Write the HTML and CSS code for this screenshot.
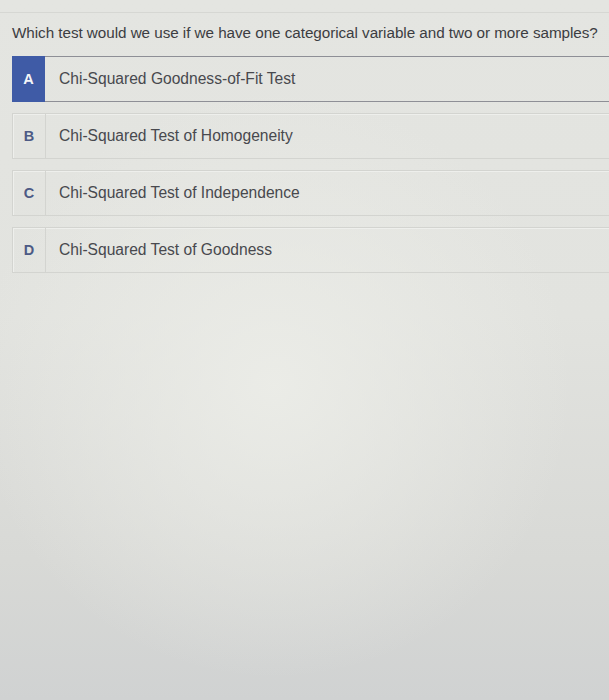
FILE: index.html
```html
<!DOCTYPE html>
<html>
<head>
<meta charset="utf-8">
<link rel="stylesheet" href="styles.css">
</head>
<body>
<div class="page">
  <div class="topline"></div>
  <p class="question">Which test would we use if we have one categorical variable and two or more samples?</p>
  <div class="options">
    <div class="option selected"><span class="letter">A</span><span class="label">Chi-Squared Goodness-of-Fit Test</span></div>
    <div class="option"><span class="letter">B</span><span class="label">Chi-Squared Test of Homogeneity</span></div>
    <div class="option"><span class="letter">C</span><span class="label">Chi-Squared Test of Independence</span></div>
    <div class="option"><span class="letter">D</span><span class="label">Chi-Squared Test of Goodness</span></div>
  </div>
</div>
</body>
</html>
```
FILE: styles.css
```css
html, body {
  margin: 0;
  height: 100%;
}
body {
  font-family: "Liberation Sans", Arial, sans-serif;
  background:
    radial-gradient(ellipse 70% 60% at 45% 55%, rgba(236,237,232,0.9), rgba(236,237,232,0) 70%),
    linear-gradient(180deg, #e4e5e1 0%, #e2e3df 45%, #d8d9d6 80%, #d0d2d2 100%);
  overflow: hidden;
}
.page {
  padding-top: 12px;
}
.topline {
  height: 1px;
  background: #d6d7d3;
}
.question {
  margin: 11px 0 0 12px;
  font-size: 15.25px;
  line-height: 18px;
  color: #3c3d42;
  letter-spacing: -0.05px;
}
.options {
  margin: 14px 0 0 12px;
  display: flex;
  flex-direction: column;
  gap: 11px;
}
.option {
  display: flex;
  align-items: stretch;
  height: 44px;
  border: 1px solid #d3d4d0;
  border-right: none;
  box-shadow: inset 1px 1px 0 #eeefec;
}
.option.selected {
  border-color: #8e8f96;
  border-left: none;
  box-shadow: none;
}
.letter {
  width: 32px;
  flex: none;
  display: flex;
  align-items: center;
  justify-content: center;
  font-size: 14.5px;
  font-weight: bold;
  color: #4d5a85;
  border-right: 1px solid #d3d4d0;
}
.option.selected .letter {
  background: #3f5ba6;
  color: #f4f5f8;
  border-right: none;
  margin: -1px 0;
  padding: 1px 0;
  width: 33px;
}
.label {
  display: flex;
  align-items: center;
  padding-left: 13px;
  font-size: 15.6px;
  color: #48494e;
}
.option.selected .label {
  padding-left: 14px;
}
```
